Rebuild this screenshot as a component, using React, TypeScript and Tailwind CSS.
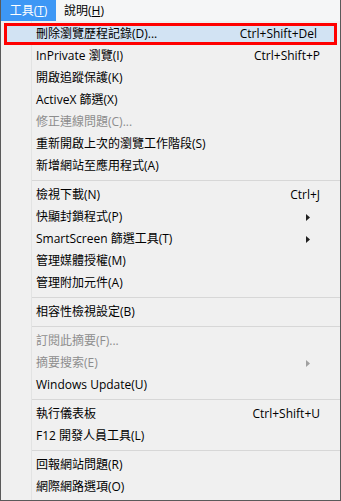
import { Fragment } from "react";

type MenuItem =
  | { kind: "item"; label: string; shortcut?: string; disabled?: boolean; submenu?: boolean; selected?: boolean }
  | { kind: "sep" };

const items: MenuItem[] = [
  { kind: "item", label: "刪除瀏覽歷程記錄(D)...", shortcut: "Ctrl+Shift+Del", selected: true },
  { kind: "item", label: "InPrivate 瀏覽(I)", shortcut: "Ctrl+Shift+P" },
  { kind: "item", label: "開啟追蹤保護(K)" },
  { kind: "item", label: "ActiveX 篩選(X)" },
  { kind: "item", label: "修正連線問題(C)...", disabled: true },
  { kind: "item", label: "重新開啟上次的瀏覽工作階段(S)" },
  { kind: "item", label: "新增網站至應用程式(A)" },
  { kind: "sep" },
  { kind: "item", label: "檢視下載(N)", shortcut: "Ctrl+J" },
  { kind: "item", label: "快顯封鎖程式(P)", submenu: true },
  { kind: "item", label: "SmartScreen 篩選工具(T)", submenu: true },
  { kind: "item", label: "管理媒體授權(M)" },
  { kind: "item", label: "管理附加元件(A)" },
  { kind: "sep" },
  { kind: "item", label: "相容性檢視設定(B)" },
  { kind: "sep" },
  { kind: "item", label: "訂閱此摘要(F)...", disabled: true },
  { kind: "item", label: "摘要搜索(E)", disabled: true, submenu: true },
  { kind: "item", label: "Windows Update(U)" },
  { kind: "sep" },
  { kind: "item", label: "執行儀表板", shortcut: "Ctrl+Shift+U" },
  { kind: "item", label: "F12 開發人員工具(L)" },
  { kind: "sep" },
  { kind: "item", label: "回報網站問題(R)" },
  { kind: "item", label: "網際網路選項(O)" },
];

function Arrow({ disabled }: { disabled?: boolean }) {
  return (
    <svg width="4" height="7" viewBox="0 0 4 7" className="mr-[10px]">
      <path d="M0 0 L4 3.5 L0 7 Z" fill={disabled ? "#a0a0a0" : "#202020"} />
    </svg>
  );
}

export default function App() {
  return (
    <div
      className="flex h-[501px] w-[341px] flex-col overflow-hidden border-x border-b border-[#5a5a5a] bg-[#f0f0f0] text-[12px] text-black"
      style={{ fontFamily: '"Open Sans", "Noto Sans CJK TC", sans-serif' }}
    >
      <div className="flex h-[21px] shrink-0 items-stretch bg-[#f5f6f7]">
        <div className="flex w-[55px] items-center justify-center bg-[#3d97f5] text-white">
          工具(<span className="underline">T</span>)
        </div>
        <div className="flex items-center pl-[8px]">
          說明(<span className="underline">H</span>)
        </div>
      </div>
      <div className="relative flex flex-1 flex-col pt-[2px]">
        <div className="absolute bottom-0 left-[30px] top-0 w-px bg-[#e2e3e3]" />
        {items.map((it, i) =>
          it.kind === "sep" ? (
            <div key={i} className="relative flex h-[7px] items-center pl-[31px]">
              <div className="h-px flex-1 bg-[#d7d7d7]" />
            </div>
          ) : (
            <Fragment key={i}>
              <div
                className={
                  it.selected
                    ? "relative mx-[3px] flex h-[22px] items-center border-[3px] border-[#ff0000] bg-[#d2e3f3] pl-[29px] pr-[17px]"
                    : "relative flex h-[22px] items-center pl-[35px] pr-[20px]"
                }
              >
                <span className={it.disabled ? "flex-1 text-[#8d8d8d]" : "flex-1"}>{it.label}</span>
                {it.shortcut && <span>{it.shortcut}</span>}
                {it.submenu && <Arrow disabled={it.disabled} />}
              </div>
            </Fragment>
          )
        )}
      </div>
    </div>
  );
}
